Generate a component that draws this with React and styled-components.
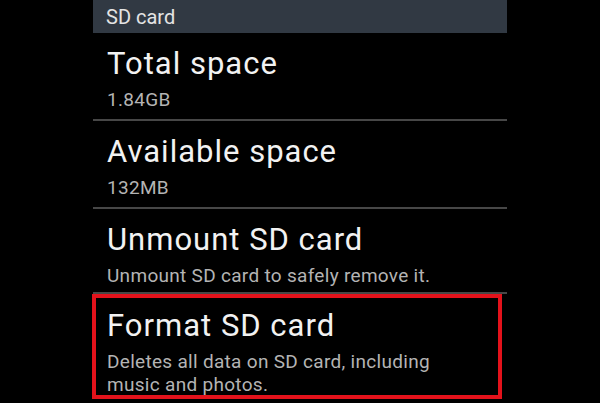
import React from "react";
import styled, { createGlobalStyle } from "styled-components";

const GlobalStyle = createGlobalStyle`
  html, body {
    margin: 0;
    padding: 0;
    background: #000;
  }
  body {
    font-family: Roboto, "Liberation Sans", sans-serif;
    color: #fff;
  }
`;

const items = [
  { title: "Total space", summary: "1.84GB", height: 88 },
  { title: "Available space", summary: "132MB", height: 88 },
  { title: "Unmount SD card", summary: "Unmount SD card to safely remove it.", height: 85 },
  {
    title: "Format SD card",
    summary: "Deletes all data on SD card, including music and photos.",
    height: 105,
    highlighted: true,
  },
];

function App() {
  return (
    <>
      <GlobalStyle />
      <St.Screen>
        <St.Panel>
          <St.Category>SD card</St.Category>
          {items.map((item) => (
            <St.Item key={item.title} $height={item.height} $highlighted={item.highlighted}>
              <St.Title>{item.title}</St.Title>
              <St.Summary>{item.summary}</St.Summary>
            </St.Item>
          ))}
        </St.Panel>
      </St.Screen>
    </>
  );
}

export default App;

const St = {
  Screen: styled.div`
    width: 600px;
    height: 403px;
    background: #000;
    overflow: hidden;
    display: flex;
    justify-content: center;
  `,
  Panel: styled.div`
    width: 414px;
    display: flex;
    flex-direction: column;
  `,
  Category: styled.div`
    height: 33px;
    box-sizing: border-box;
    padding: 5px 0 0 13px;
    background: #313943;
    color: #e4e4e4;
    font-size: 20px;
    line-height: 24px;
  `,
  Item: styled.div`
    box-sizing: border-box;
    height: ${(p) => p.$height}px;
    padding: 13px 0 0 14px;
    border-bottom: 2px solid #474747;
    ${(p) =>
      p.$highlighted &&
      `
      padding: 10px 0 0 11px;
      border: 4px solid #e3121b;
      margin-right: 5px;
      margin-left: -1px;
    `}
  `,
  Title: styled.div`
    font-size: 31px;
    line-height: 36px;
    letter-spacing: 1px;
    color: #f2f2f2;
  `,
  Summary: styled.div`
    margin-top: 6px;
    font-size: 19px;
    line-height: 23px;
    letter-spacing: 0.3px;
    color: #b4b4b4;
    max-width: 345px;
  `,
};
